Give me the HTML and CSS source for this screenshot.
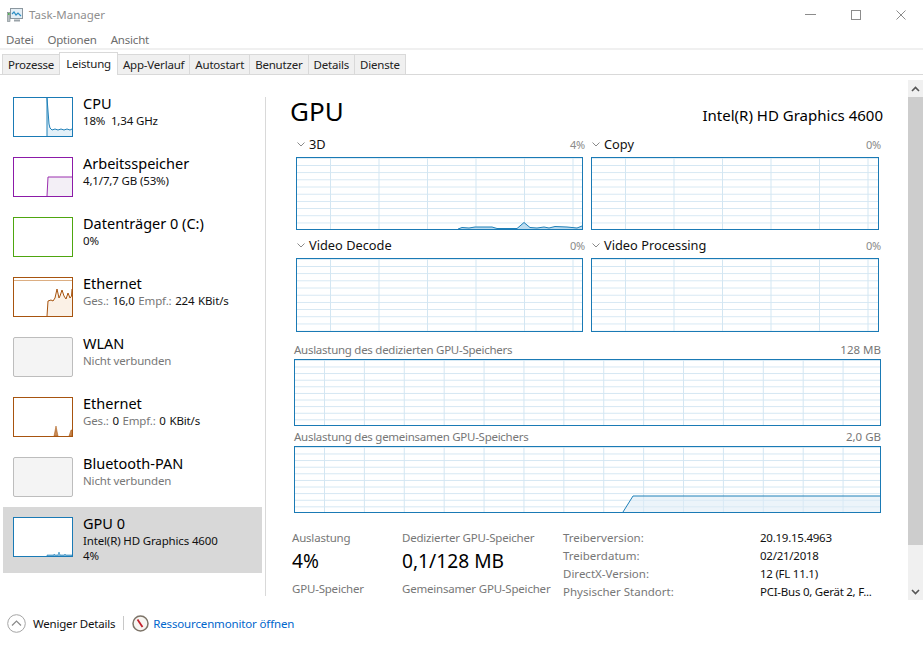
FILE: index.html
```html
<!DOCTYPE html>
<html lang="de">
<head>
<meta charset="utf-8">
<title>Task-Manager</title>
<link rel="stylesheet" href="styles.css">
</head>
<body>
<div class="window">
  <header class="titlebar">
    <svg class="app-icon" width="18" height="16" viewBox="0 0 18 16"><rect x="3.5" y="1.5" width="12" height="10" fill="#e4eef5" stroke="#8b979f"/><path d="M5 7l2-2 2 3 2-2 3 3" fill="none" stroke="#2f8fc4" stroke-width="1.2"/><rect x="0.5" y="5.5" width="2.5" height="9" fill="#b9c0c4" stroke="#7b858b" stroke-width=".6"/><rect x="1" y="6" width="1.5" height="2" fill="#54b054"/><path d="M7 13.5h6" stroke="#9aa3a9" stroke-width="2"/></svg>
    <span class="title">Task-Manager</span>
    <div class="winctl">
      <svg width="11" height="10" viewBox="0 0 11 10"><path d="M0 4.500h11" stroke="#8c8c8c"/></svg>
      <svg width="10" height="10" viewBox="0 0 10 10"><rect x=".5" y=".5" width="9" height="9" fill="none" stroke="#8c8c8c"/></svg>
      <svg width="10" height="10" viewBox="0 0 10 10"><path d="M.5.500l9 9M9.500.500l-9 9" stroke="#8c8c8c" fill="none"/></svg>
    </div>
  </header>
  <nav class="menubar"><span>Datei</span><span>Optionen</span><span>Ansicht</span></nav>
  <div class="tabs">
    <span class="tab">Prozesse</span><span class="tab active">Leistung</span><span class="tab">App-Verlauf</span><span class="tab">Autostart</span><span class="tab">Benutzer</span><span class="tab">Details</span><span class="tab">Dienste</span>
  </div>
  <main class="body">
    <aside class="side">
      <div class="item">
        <div class="thumb cpu"><svg viewBox="0 0 58 38" preserveAspectRatio="none"><path d="M33 38V0l2 26 1 4 2 2 3-1 3 1 3-1 3 1 3-1 3 1 2-1v7z" fill="#e3f0f8"/><path d="M33 38V0l2 26 1 4 2 2 3-1 3 1 3-1 3 1 3-1 3 1 2-1" fill="none" stroke="#1f80b8"/></svg></div>
        <div class="info"><div class="name">CPU</div><div class="sub">18%&nbsp; 1,34 GHz</div></div>
      </div>
      <div class="item">
        <div class="thumb mem"><svg viewBox="0 0 58 38" preserveAspectRatio="none"><path d="M33 38l1-19h24v19z" fill="#f3eff6"/><path d="M33 38l1-19h24" fill="none" stroke="#9b2fae"/></svg></div>
        <div class="info"><div class="name">Arbeitsspeicher</div><div class="sub">4,1/7,7 GB (53%)</div></div>
      </div>
      <div class="item">
        <div class="thumb disk"></div>
        <div class="info"><div class="name">Datenträger 0 (C:)</div><div class="sub">0%</div></div>
      </div>
      <div class="item">
        <div class="thumb eth"><svg viewBox="0 0 58 38" preserveAspectRatio="none"><path d="M0 2.500h58" stroke="#dcae82"/><path d="M33 38l1-15 3-1 2 1 2-3 2-9 2 9 1-2 2-6 2 6 2 3 2-6 2 5 1.500-2 .5-7v27z" fill="#fbf1e6"/><path d="M33 38l1-15 3-1 2 1 2-3 2-9 2 9 1-2 2-6 2 6 2 3 2-6 2 5 1.500-2 .5-7" fill="none" stroke="#a7540f"/></svg></div>
        <div class="info"><div class="name">Ethernet</div><div class="sub net"><span class="dim">Ges.:</span> 16,0 <span class="dim">Empf.:</span> 224 KBit/s</div></div>
      </div>
      <div class="item">
        <div class="thumb off"></div>
        <div class="info"><div class="name">WLAN</div><div class="sub dim">Nicht verbunden</div></div>
      </div>
      <div class="item">
        <div class="thumb eth"><svg viewBox="0 0 58 38" preserveAspectRatio="none"><path d="M40 38l2-10 2 10zM55 38l2-6 1 0v6z" fill="#c98a55" stroke="#a7540f" stroke-width=".5"/></svg></div>
        <div class="info"><div class="name">Ethernet</div><div class="sub net"><span class="dim">Ges.:</span> 0 <span class="dim">Empf.:</span> 0 KBit/s</div></div>
      </div>
      <div class="item">
        <div class="thumb off"></div>
        <div class="info"><div class="name">Bluetooth-PAN</div><div class="sub dim">Nicht verbunden</div></div>
      </div>
      <div class="item selected">
        <div class="thumb cpu"><svg viewBox="0 0 58 38" preserveAspectRatio="none"><path d="M33 38v-1h7v-1l1 1h3l1-3 1 3h4l1-1 1 1h6v1z" fill="#9fcbe5" stroke="#1f80b8" stroke-width=".6"/></svg></div>
        <div class="info"><div class="name">GPU 0</div><div class="sub">Intel(R) HD Graphics 4600</div><div class="sub">4%</div></div>
      </div>
    </aside>
    <div class="divider"></div>
    <section class="panel">
      <div class="heading"><h1>GPU</h1><span class="adapter">Intel(R) HD Graphics 4600</span></div>
      <div class="engines">
        <div class="engine">
          <div class="ghead"><span class="gname"><svg class="chev" width="8" height="5" viewBox="0 0 8 5"><path d="M.5.500L4 4 7.500.500" fill="none" stroke="#8a8a8a"/></svg>3D</span><span class="gval">4%</span></div>
          <div class="graph small"><svg viewBox="0 0 285 71" preserveAspectRatio="none"><path d="M161 71l4-1.500 7 .5 6-1h17l5 1.500h20l7-6 6 5 7 .5 7-1 5 1 6-1.500 12 .5 10 1 5-2v3z" fill="#bcdcf0"/><path d="M161 71l4-1.500 7 .5 6-1h17l5 1.500h20l7-6 6 5 7 .5 7-1 5 1 6-1.500 12 .5 10 1 5-2" fill="none" stroke="#1f80b8"/></svg></div>
        </div>
        <div class="engine">
          <div class="ghead"><span class="gname"><svg class="chev" width="8" height="5" viewBox="0 0 8 5"><path d="M.5.500L4 4 7.500.500" fill="none" stroke="#8a8a8a"/></svg>Copy</span><span class="gval">0%</span></div>
          <div class="graph small"></div>
        </div>
        <div class="engine">
          <div class="ghead"><span class="gname"><svg class="chev" width="8" height="5" viewBox="0 0 8 5"><path d="M.5.500L4 4 7.500.500" fill="none" stroke="#8a8a8a"/></svg>Video Decode</span><span class="gval">0%</span></div>
          <div class="graph small"></div>
        </div>
        <div class="engine">
          <div class="ghead"><span class="gname"><svg class="chev" width="8" height="5" viewBox="0 0 8 5"><path d="M.5.500L4 4 7.500.500" fill="none" stroke="#8a8a8a"/></svg>Video Processing</span><span class="gval">0%</span></div>
          <div class="graph small"></div>
        </div>
      </div>
      <div class="memgraphs">
        <div class="mhead"><span>Auslastung des dedizierten GPU-Speichers</span><span class="mval">128 MB</span></div>
        <div class="graph wide"></div>
        <div class="mhead"><span>Auslastung des gemeinsamen GPU-Speichers</span><span class="mval">2,0 GB</span></div>
        <div class="graph wide"><svg viewBox="0 0 585 65" preserveAspectRatio="none"><path d="M328 65l10-16h247v16z" fill="#dcebf6" fill-opacity=".55"/><path d="M328 65l10-16h247" fill="none" stroke="#1f80b8"/></svg></div>
      </div>
      <div class="stats">
        <div class="stat"><div class="lab">Auslastung</div><div class="big">4%</div><div class="lab next">GPU-Speicher</div></div>
        <div class="stat"><div class="lab">Dedizierter GPU-Speicher</div><div class="big">0,1/128 MB</div><div class="lab next">Gemeinsamer GPU-Speicher</div></div>
        <dl class="props">
          <dt>Treiberversion:</dt><dd>20.19.15.4963</dd>
          <dt>Treiberdatum:</dt><dd>02/21/2018</dd>
          <dt>DirectX-Version:</dt><dd>12 (FL 11.1)</dd>
          <dt>Physischer Standort:</dt><dd>PCI-Bus 0, Gerät 2, F...</dd>
        </dl>
      </div>
    </section>
    <div class="scrollbar">
      <div class="arrow"><svg width="9" height="6" viewBox="0 0 9 6"><path d="M1 5l3.500-3.500L8 5" fill="none" stroke="#555" stroke-width="1.600"/></svg></div>
      <div class="thumbbar"></div>
      <div class="track"></div>
      <div class="arrow"><svg width="9" height="6" viewBox="0 0 9 6"><path d="M1 1l3.500 3.500L8 1" fill="none" stroke="#555" stroke-width="1.600"/></svg></div>
    </div>
  </main>
  <footer class="footer">
    <svg class="less" width="19" height="19" viewBox="0 0 19 19"><circle cx="9.500" cy="9.500" r="8.800" fill="none" stroke="#a5a5a5"/><path d="M5 11.500l4.500-4.500 4.500 4.500" fill="none" stroke="#8a8a8a" stroke-width="1.200"/></svg>
    <span class="less-text">Weniger Details</span>
    <span class="sep"></span>
    <svg class="resmon" width="17" height="17" viewBox="0 0 17 17"><circle cx="8.500" cy="8.500" r="7.500" fill="#f7f5f1" stroke="#7d7468" stroke-width="1.500"/><path d="M5.500 4.500l5 7.500" stroke="#c3202b" stroke-width="1.800"/></svg>
    <span class="link">Ressourcenmonitor öffnen</span>
  </footer>
</div>
</body>
</html>
```
FILE: styles.css
```css
* { box-sizing: border-box; }
html, body { margin: 0; height: 100%; background: #fff; overflow: hidden; }
body { font-family: "Noto Sans", "Open Sans", sans-serif; font-size: 11.5px; letter-spacing: -0.2px; color: #000; }
.window { width: 923px; height: 648px; display: flex; flex-direction: column; }

.titlebar { height: 30px; flex: none; display: flex; align-items: center; padding: 0 0 1px 7px; }
.app-icon { margin-right: 4px; }
.title { color: #8f8f8f; font-size: 11.5px; letter-spacing: 0; }
.winctl { margin-left: auto; display: flex; align-items: center; gap: 35px; padding-right: 17px; }

.menubar { height: 20px; flex: none; display: flex; align-items: center; gap: 14px; padding-left: 6px; color: #6d6d6d; border-bottom: 2px solid #f0f0f0; }

.tabs { height: 25px; flex: none; display: flex; align-items: flex-end; padding-left: 3px; border-bottom: 1px solid #d9d9d9; }
.tab { height: 20px; padding: 0 5px; display: flex; align-items: center; background: #f0f0f0; border: 1px solid #d9d9d9; border-bottom: 0; margin-left: -1px; color: #222; }
.tab.active { height: 23px; background: #fff; padding: 0 6px 2px; margin-bottom: -1px; position: relative; }

.body { flex: 1; min-height: 0; display: flex; }
.side { width: 265px; flex: none; padding: 12px 0 0 3px; }
.item { height: 60px; display: flex; padding: 10px 0 0 10px; width: 259px; }
.item.selected { height: 66px; background: #d8d8d8; }
.thumb { width: 60px; height: 40px; flex: none; border: 1px solid; background: #fff; }
.thumb svg { display: block; width: 100%; height: 100%; }
.cpu { border-color: #1a7ab5; }
.mem { border-color: #8c1aa8; }
.disk { border-color: #4ea60f; }
.eth { border-color: #a7540f; }
.off { border-color: #bdbdbd; background: #f4f4f4; border-radius: 2px; }
.info { margin-left: 10px; margin-top: -4px; }
.name { font-size: 14.5px; line-height: 20px; letter-spacing: 0; }
.sub { font-size: 11.5px; line-height: 15px; color: #111; letter-spacing: -0.15px; }
.net { word-spacing: 0.8px; }
.dim { color: #777; }

.divider { width: 1px; height: 499px; flex: none; margin-top: 22px; background: #d9d9d9; }

.panel { flex: 1; min-width: 0; overflow: hidden; height: 525px; }
.heading { height: 62px; display: flex; justify-content: space-between; align-items: flex-start; padding: 20px 25px 0 24px; }
h1 { margin: 0; font-size: 26px; line-height: 32px; font-weight: 400; letter-spacing: 0; }
.adapter { font-size: 15px; line-height: 20px; margin-top: 10px; letter-spacing: 0; }

.engines { margin-left: 30px; width: 583px; display: grid; grid-template-columns: 287px 288px; column-gap: 8px; row-gap: 8px; }
.ghead { height: 20px; display: flex; justify-content: space-between; align-items: flex-start; margin-right: -2px; }
.gname { display: flex; align-items: center; gap: 4px; margin-left: 1px; font-size: 12.8px; line-height: 15px; letter-spacing: 0; color: #111; }
.gval { color: #8a8a8a; font-size: 11px; line-height: 15px; }
.graph { border: 1px solid #1a7ab5; background-color: #fff; background-repeat: repeat; }
.graph svg { display: block; width: 100%; height: 100%; }
.small { height: 73px; background-image: linear-gradient(to right, #d3e6f2 1px, transparent 1px), linear-gradient(to bottom, #d3e6f2 1px, transparent 1px); background-size: 48.5px 100%, 100% 7.2px; background-position: 33px 0, 0 7px; }
.engine:nth-child(n+3) .small { height: 74px; }
.wide { height: 67px; background-image: linear-gradient(to right, #d3e6f2 1px, transparent 1px), linear-gradient(to bottom, #d3e6f2 1px, transparent 1px); background-size: 39.9px 100%, 100% 6.62px; background-position: 29px 0, 0 6.5px; }

.memgraphs { margin: 7px 0 0 28px; width: 587px; }
.mhead { height: 20px; display: flex; justify-content: space-between; align-items: center; color: #777; letter-spacing: -0.27px; font-size: 11.5px; }
.mval { letter-spacing: 0; }

.stats { margin: 16px 0 0 26px; display: grid; grid-template-columns: 110px 161px 1fr; }
.lab { line-height: 18px; color: #777; white-space: nowrap; }
.next { margin-top: 5px; }
.big { font-size: 19.2px; line-height: 28px; letter-spacing: 0; }
.props { margin: 0; display: grid; grid-template-columns: 197px 1fr; line-height: 18px; }
.props dt { color: #777; letter-spacing: 0; }
.props dd { margin: 0; color: #111; letter-spacing: -0.25px; white-space: nowrap; }

.scrollbar { width: 15px; flex: none; margin-top: 5px; height: 520px; display: flex; flex-direction: column; background: #f0f0f0; }
.arrow { height: 17px; display: flex; align-items: center; justify-content: center; }
.thumbbar { height: 448px; background: #cdcdcd; }
.track { flex: 1; }

.footer { height: 48px; flex: none; display: flex; align-items: center; padding: 0 0 2px 7px; }
.less-text { margin-left: 7px; color: #111; }
.sep { width: 1px; height: 14px; background: #c8c8c8; margin: 0 8px; }
.link { margin-left: 4px; color: #0066cc; letter-spacing: -0.15px; }
```
